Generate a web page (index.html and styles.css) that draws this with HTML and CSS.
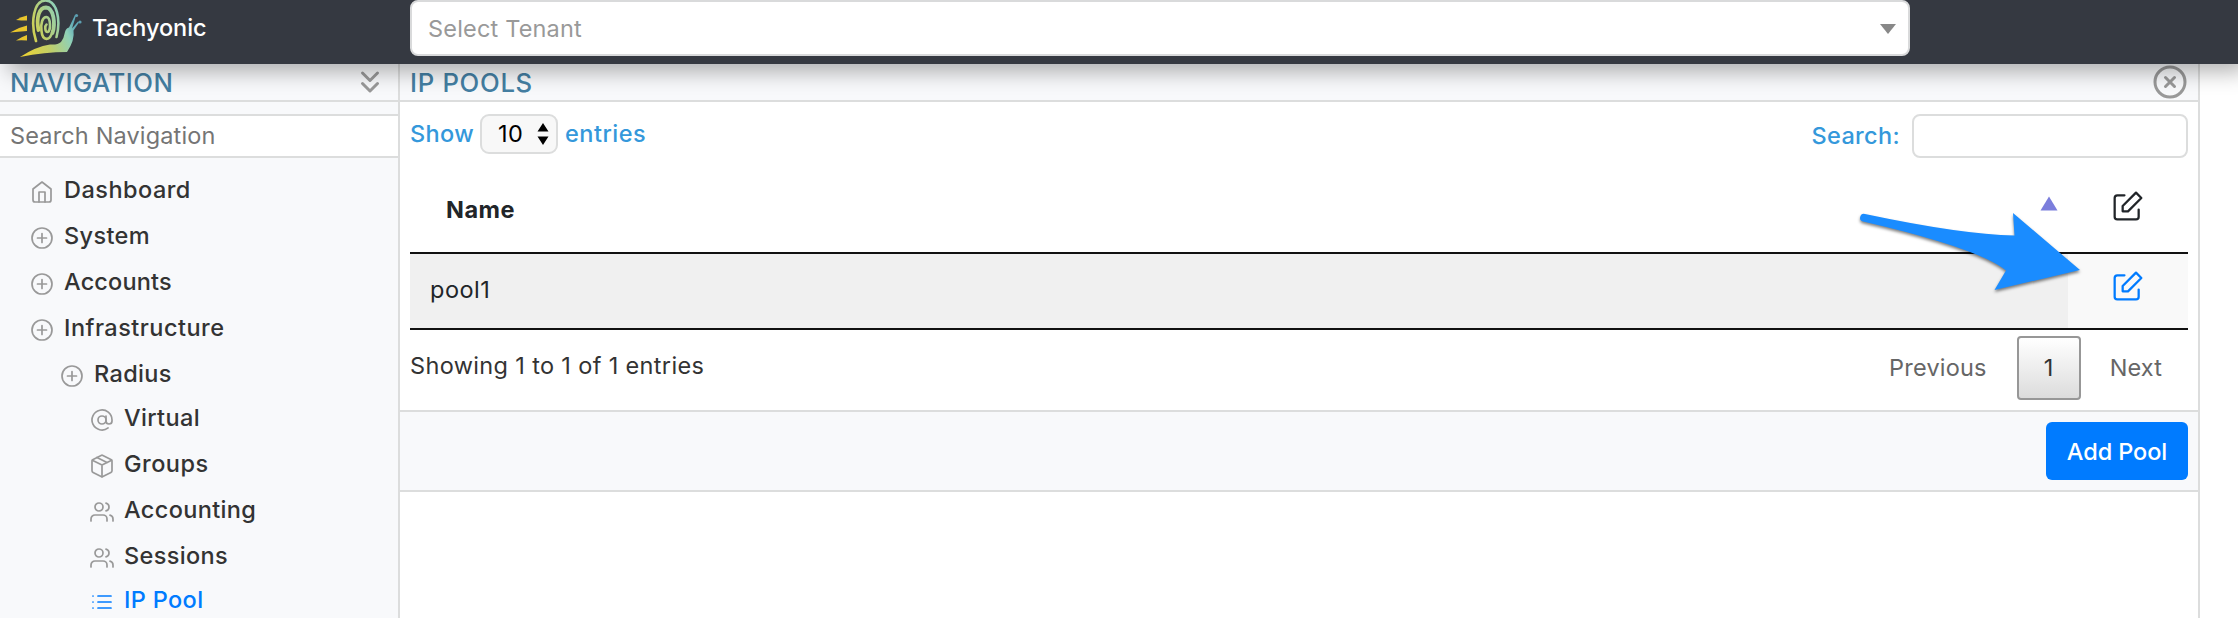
FILE: index.html
```html
<!DOCTYPE html>
<html lang="en">
<head>
<meta charset="utf-8">
<title>Tachyonic</title>
<link rel="stylesheet" href="styles.css">
</head>
<body>
<svg class="sprite" aria-hidden="true">
  <symbol id="home" viewBox="0 0 24 24"><path d="M3 9l9-7 9 7v11a2 2 0 0 1-2 2H5a2 2 0 0 1-2-2z"/><path d="M9 22V12h6v10"/></symbol>
  <symbol id="plus" viewBox="0 0 24 24"><circle cx="12" cy="12" r="10"/><path d="M12 7.500v9M7.500 12h9"/></symbol>
  <symbol id="at" viewBox="0 0 24 24"><circle cx="12" cy="12" r="4"/><path d="M16 8v5a3 3 0 0 0 6 0v-1a10 10 0 1 0-3.920 7.940"/></symbol>
  <symbol id="package" viewBox="0 0 24 24"><path d="M12.890 1.450l8 4A2 2 0 0 1 22 7.240v9.530a2 2 0 0 1-1.110 1.790l-8 4a2 2 0 0 1-1.790 0l-8-4a2 2 0 0 1-1.100-1.800V7.240a2 2 0 0 1 1.110-1.790l8-4a2 2 0 0 1 1.780 0z"/><path d="M2.320 6.160L12 11l9.680-4.840M12 22.760V11M7 3.500l10 5"/></symbol>
  <symbol id="users" viewBox="0 0 24 24"><path d="M17 21v-2a4 4 0 0 0-4-4H5a4 4 0 0 0-4 4v2"/><circle cx="9" cy="7" r="4"/><path d="M23 21v-2a4 4 0 0 0-3-3.870M16 3.130a4 4 0 0 1 0 7.750"/></symbol>
  <symbol id="list" viewBox="0 0 24 24"><path d="M8 6h13M8 12h13M8 18h13M3 6h.01M3 12h.01M3 18h.01"/></symbol>
  <symbol id="edit" viewBox="0 0 24 24"><path d="M20 14.660V20a2 2 0 0 1-2 2H4a2 2 0 0 1-2-2V6a2 2 0 0 1 2-2h5.340"/><path d="M18 2l4 4-10 10H8v-4z"/></symbol>
  <symbol id="chevrons" viewBox="0 0 24 24"><path d="M7 13l5 5 5-5M7 6l5 5 5-5"/></symbol>
  <symbol id="close" viewBox="0 0 24 24"><circle cx="12" cy="12" r="10"/><path d="M15 9l-6 6M9 9l6 6"/></symbol>
</svg>

<header class="topbar">
  <a class="brand">
    <svg class="logo" viewBox="0 0 84 64">
      <defs>
        <linearGradient id="lg" gradientUnits="userSpaceOnUse" x1="14" y1="50" x2="74" y2="24"><stop offset="0" stop-color="#f5d327"/><stop offset=".5" stop-color="#c2cf66"/><stop offset=".85" stop-color="#8fd0b8"/><stop offset="1" stop-color="#5fa9b8"/></linearGradient>
      </defs>
      <g fill="#e9c52c">
        <path d="M16 20Q21 16.500 27 15.500v5Q21 20.500 16 20z"/>
        <path d="M10 32.500Q18 27.500 27 25.500v5.500Q18 31.500 10 32.500z"/>
        <path d="M16 40.500Q21 37 27 35v5.500Q21 40 16 40.500z"/>
      </g>
      <path fill="url(#lg)" d="M20 57Q36 46.500 50 44.500Q58 45 61 42Q64 38 65 32Q66 28 69 27.500L75 15l1 .5-4 13 6-7 1 1-5.500 8Q75 40 67 52Q45 52 20 57z"/>
      <circle cx="76.500" cy="15.500" r="1.600" fill="#5d9fb2"/><circle cx="80" cy="22" r="1.600" fill="#5d9fb2"/>
      <g fill="none" stroke="url(#lg)" stroke-linecap="round">
        <path stroke-width="2.600" d="M36 41C30 22 34 .5 45.500 .5C57 .5 61 20 56.500 37"/>
        <path stroke-width="3.800" d="M38.500 30C36 18 39 7.500 46 7.500C54 8 55.500 24 52.500 33"/>
        <path stroke-width="2.600" d="M52.500 31C50 42 42.500 41 41.500 31C40.500 23 42.500 17 46.500 17C51 17.500 51 32 47.500 32C45 32 44.500 26 46.500 24.500"/>
      </g>
    </svg>
    <span>Tachyonic</span>
  </a>
  <div class="tenant"><span>Select Tenant</span><svg class="caret" viewBox="0 0 16 10"><path d="M0 0h16L8 10z"/></svg></div>
</header>

<div class="layout">
  <aside class="sidebar">
    <div class="panel-head"><h2>NAVIGATION</h2><svg class="icon big"><use href="#chevrons"/></svg></div>
    <div class="nav-search">Search Navigation</div>
    <nav class="nav">
      <a class="item"><svg class="icon"><use href="#home"/></svg><span class="wide">Dashboard</span></a>
      <a class="item"><svg class="icon"><use href="#plus"/></svg><span>System</span></a>
      <a class="item"><svg class="icon"><use href="#plus"/></svg><span class="tight">Accounts</span></a>
      <a class="item"><svg class="icon"><use href="#plus"/></svg><span class="wide">Infrastructure</span></a>
      <div class="sub">
        <a class="item last"><svg class="icon"><use href="#plus"/></svg><span>Radius</span></a>
        <div class="sub">
          <a class="item"><svg class="icon"><use href="#at"/></svg><span>Virtual</span></a>
          <a class="item"><svg class="icon"><use href="#package"/></svg><span class="wide">Groups</span></a>
          <a class="item"><svg class="icon"><use href="#users"/></svg><span>Accounting</span></a>
          <a class="item last"><svg class="icon"><use href="#users"/></svg><span>Sessions</span></a>
          <a class="item active"><svg class="icon"><use href="#list"/></svg><span>IP Pool</span></a>
        </div>
      </div>
    </nav>
  </aside>

  <main class="content">
    <div class="panel-head"><h2 class="pools">IP POOLS</h2><svg class="icon big"><use href="#close"/></svg></div>
    <section class="body">
      <div class="controls">
        <div class="length">
          <span>Show</span>
          <div class="select"><span>10</span><svg class="updown" viewBox="0 0 12 22"><path d="M6 0l5.500 8.500H.5zM6 22l5.500-8.500H.5z"/></svg></div>
          <span class="wide">entries</span>
        </div>
        <label class="search"><span>Search:</span><input type="text"></label>
      </div>
      <div class="table">
        <div class="row head">
          <div class="cell name">Name<svg class="sort" viewBox="0 0 18 15"><path d="M9 .5L17.500 14.500H.5z"/></svg></div>
          <div class="cell action"><svg class="icon edit"><use href="#edit"/></svg></div>
        </div>
        <div class="row">
          <div class="cell name value">pool1</div>
          <div class="cell action link"><svg class="icon edit"><use href="#edit"/></svg></div>
        </div>
      </div>
      <div class="summary">
        <span class="info">Showing 1 to 1 of 1 entries</span>
        <div class="pager"><span class="prev">Previous</span><span class="page">1</span><span class="next">Next</span></div>
      </div>
    </section>
    <div class="foot"><button class="btn">Add Pool</button></div>
  </main>
</div>

<svg class="pointer" viewBox="0 0 230 90">
  <path d="M15 4Q112 24.500 164.500 25.500L163 3L230 60L144.500 80L156 60.500Q128 38 13 11.500A3.800 3.800 0 0 1 15 4z"/>
</svg>
</body>
</html>
```
FILE: styles.css
```css
* { box-sizing: border-box; }

body {
  margin: 0;
  height: 618px;
  overflow: hidden;
  display: flex;
  flex-direction: column;
  background: #fff;
  color: #212529;
  font: 400 23.5px/36px Inter, "Open Sans", sans-serif;
  letter-spacing: .35px;
}

.sprite { position: absolute; width: 0; height: 0; }

.icon {
  flex: none;
  width: 24px;
  height: 24px;
  fill: none;
  stroke: #999;
  stroke-width: 1.7;
  stroke-linecap: round;
  stroke-linejoin: round;
}
.icon.big { width: 36px; height: 36px; stroke-width: 2; }
.icon.edit { width: 32px; height: 32px; stroke: currentColor; }

/* Top bar */
.topbar {
  position: relative;
  z-index: 2;
  flex: none;
  display: flex;
  height: 64px;
  background: #353941;
  box-shadow: 8px 8px 20px rgba(0, 0, 0, .3);
}
.brand {
  display: flex;
  width: 410px;
  color: #fff;
  font-weight: 500;
  letter-spacing: -.08px;
}
.brand span { padding-top: 10px; margin-left: 8px; }
.logo { width: 84px; height: 64px; }
.tenant {
  display: flex;
  justify-content: space-between;
  align-items: center;
  width: 1500px;
  height: 56px;
  padding: 2px 12px 0 16px;
  border: 2px solid #d9dadb;
  border-radius: 8px;
  background: #fff;
  color: #999;
  letter-spacing: .18px;
}
.caret { width: 16px; height: 10px; fill: #888; }

/* Panels */
.layout { flex: 1; display: flex; min-height: 0; }
.sidebar { width: 400px; background: #f8f9fb; border-right: 2px solid #dcdddd; }
.content { width: 1800px; border-right: 2px solid #dcdddd; }
.panel-head {
  display: flex;
  justify-content: space-between;
  height: 38px;
  padding: 0 10px;
  border-bottom: 2px solid #dcdddd;
  background: #f8f9fb;
}
h2 {
  margin: 0;
  color: #447fa3;
  font-size: 25.7px;
  font-weight: 500;
  line-height: 37px;
  letter-spacing: .5px;
}
.pools { letter-spacing: .7px; }

/* Sidebar */
.nav-search {
  height: 44px;
  margin-top: 12px;
  padding-left: 10px;
  border: solid #dcdddd;
  border-width: 2px 0;
  background: #fff;
  color: #757575;
  line-height: 39px;
  letter-spacing: .15px;
}
.nav { padding: 14px 0 0 30px; font-weight: 500; color: #333; }
.item { display: flex; gap: 10px; height: 46px; }
.item .icon { margin-top: 8px; }
.item.last { height: 44px; }
.sub { padding-left: 30px; }
.active { color: #007bff; }
.active .icon { stroke: currentColor; }
.wide { letter-spacing: .48px; }
.tight { letter-spacing: .16px; }

/* Table area */
.body { height: 308px; padding: 12px 10px 0 10px; }
.controls {
  display: flex;
  justify-content: space-between;
  height: 62px;
  color: #3498db;
  font-weight: 500;
}
.length { display: flex; gap: 7px; line-height: 40px; }
.select {
  display: flex;
  align-items: center;
  justify-content: space-between;
  width: 78px;
  height: 40px;
  margin-left: -1px;
  padding: 0 7px 0 16px;
  border: 2px solid #dcdddd;
  border-radius: 9px;
  background: #f8f8f8;
  color: #000;
  font-weight: 400;
}
.updown { width: 12px; height: 22px; fill: #000; }
.search { display: flex; gap: 12px; line-height: 44px; }
.search input {
  width: 276px;
  height: 44px;
  border: 2px solid #dcdddd;
  border-radius: 8px;
  background: #fff;
}
.row { display: flex; height: 76px; border-bottom: 2px solid #111; }
.row.head { height: 78px; }
.cell.name {
  display: flex;
  justify-content: space-between;
  width: 1658px;
  padding: 16px 10px 0 36px;
  font-weight: 700;
  letter-spacing: .5px;
}
.cell.value { padding: 18px 0 0 20px; background: #f0f0f0; font-weight: 400; }
.cell.action { width: 120px; padding: 14px 0 0 44px; line-height: 0; }
.cell.link { padding-top: 16px; background: #f9f9f9; color: #007bff; }
.sort { width: 18px; height: 15px; margin-top: 4px; fill: #7b7edc; }
.summary {
  display: flex;
  justify-content: space-between;
  padding-top: 6px;
}
.info { padding-top: 12px; color: #333; }
.pager { display: flex; line-height: 60px; color: #666; }
.prev { margin-right: 30px; letter-spacing: .2px; }
.page {
  width: 64px;
  height: 64px;
  border: 2px solid #979797;
  border-radius: 4px;
  background: linear-gradient(#fff, #dcdcdc);
  color: #333;
  text-align: center;
}
.next { margin: 0 26px 0 29px; letter-spacing: .11px; }
.prev, .next { padding-top: 2px; }

.foot {
  display: flex;
  justify-content: flex-end;
  height: 82px;
  padding: 10px 10px 0 0;
  border: solid #dcdddd;
  border-width: 2px 0;
  background: #f8f9fb;
}
.btn {
  width: 142px;
  height: 58px;
  padding: 0;
  border: 0;
  border-radius: 6px;
  background: #007bff;
  color: #fff;
  font: 500 23.5px/60px Inter, "Open Sans", sans-serif;
  letter-spacing: -.09px;
}

/* Arrow drawn over the table, pointing at the edit link */
.pointer {
  position: absolute;
  z-index: 3;
  left: 1850px;
  top: 210px;
  width: 230px;
  height: 90px;
  overflow: visible;
  fill: #1a8cff;
  filter: drop-shadow(0 2px 1.5px rgba(0, 0, 0, .5));
}
```
